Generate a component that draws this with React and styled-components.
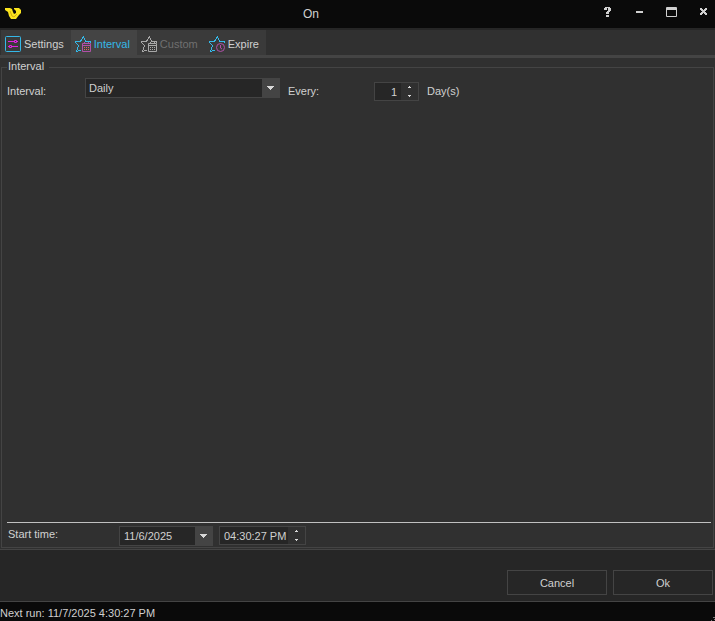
import React, { useState } from 'react'
import styled, { createGlobalStyle } from 'styled-components'

const GlobalStyle = createGlobalStyle`
  * {
    box-sizing: border-box;
  }
  body {
    margin: 0;
    background: #0a0a0a;
    overflow: hidden;
  }
  body, button, input, select {
    font-family: "Liberation Sans", Arial, sans-serif;
    font-size: 11px;
    line-height: 16px;
    color: #d0d0d0;
  }
`

const Window = styled.div`
  display: flex;
  flex-direction: column;
  min-height: 100vh;
  background: #262626;
`

const TitleBar = styled.header`
  display: flex;
  align-items: center;
  height: 28px;
  background: #0a0a0a;
`

const Logo = styled.svg`
  width: 16px;
  height: 16px;
  margin: 0 6px 0 5px;
`

const Title = styled.h1`
  flex: 1;
  margin: 0;
  font-size: 12px;
  font-weight: normal;
  text-align: center;
`

const WindowButtons = styled.div`
  display: flex;
  align-self: flex-start;
  gap: 8px;
  height: 24px;
`

const WindowButton = styled.button`
  display: flex;
  align-items: center;
  justify-content: center;
  width: 24px;
  padding: 0;
  border: 0;
  background: none;
`

const TabStrip = styled.nav`
  display: flex;
  height: 30px;
  padding-left: 1px;
  border-top: 2px solid #262626;
  border-bottom: 3px solid #444;
  background: #303030;
`

const Tab = styled.button`
  display: flex;
  align-items: center;
  gap: 3px;
  padding: 3px 7px 0 4px;
  border: 0;
  background: ${(p) => (p.$active ? '#444' : '#3a3a3a')};
  color: ${(p) => (p.$active ? '#35b8e8' : '#d0d0d0')};

  &:disabled {
    color: #707070;
  }
`

const Panel = styled.main`
  display: flex;
  flex: 1;
  padding: 0 1px 1px;
  border-bottom: 1px solid #444;
  background: #303030;
`

const Group = styled.fieldset`
  display: flex;
  flex: 1;
  flex-direction: column;
  min-width: 0;
  margin: 0;
  padding: 0 2px 1px 5px;
  border: 1px solid #444;
`

const Legend = styled.legend`
  padding: 0 5px 2px 1px;
`

const Row = styled.div`
  display: flex;
  align-items: flex-start;
  padding-top: 2px;
`

const StartRow = styled(Row)`
  margin-top: auto;
  padding-top: 3px;
  border-top: 1px solid #c0c0c0;
`

const Label = styled.label`
  width: ${(p) => p.$width}px;
  padding-top: 5px;
`

const StartLabel = styled(Label)`
  padding: 0 0 0 1px;
`

const Combo = styled.div`
  display: grid;
  grid-template-columns: 1fr 17px;
  width: ${(p) => p.$width}px;
  height: 20px;
  margin-right: ${(p) => p.$gap}px;
  border: 1px solid #444;
  background: #262626;

  > * {
    grid-row: 1;
  }
`

const Select = styled.select`
  grid-column: 1 / 3;
  padding: 0 20px 0 3px;
  border: 0;
  appearance: none;
  background: none;
`

const Field = styled.input`
  min-width: 0;
  padding: 0 ${(p) => (p.$align ? 4 : 0)}px 0 4px;
  border: 0;
  background: none;
  text-align: ${(p) => p.$align || 'left'};
`

const Arrow = styled.span`
  display: flex;
  grid-column: 2;
  align-items: center;
  justify-content: center;
  background: #444;
  pointer-events: none;
`

const DropButton = styled.button`
  display: flex;
  align-items: center;
  justify-content: center;
  padding: 0;
  border: 0;
  background: #444;
`

const Spinner = styled.div`
  display: grid;
  grid-template-columns: 1fr 17px;
  width: ${(p) => p.$width}px;
  height: 19px;
  margin-top: ${(p) => p.$top || 0}px;
  border: 1px solid #444;
  background: #262626;
`

const SpinButtons = styled.div`
  display: flex;
  flex-direction: column;
  background: #303030;
`

const SpinButton = styled.button`
  display: flex;
  flex: 1;
  align-items: center;
  justify-content: center;
  min-height: 0;
  padding: 0;
  border: 0;
  background: none;
`

const Unit = styled.span`
  padding: 5px 0 0 8px;
`

const Footer = styled.footer`
  display: flex;
  justify-content: flex-end;
  gap: 6px;
  padding: 20px 2px 6px;
  border-bottom: 1px solid #444;
`

const DialogButton = styled.button`
  width: 100px;
  height: 25px;
  padding: 0;
  border: 1px solid #444;
  background: #262626;
`

const StatusBar = styled.div`
  display: flex;
  align-items: flex-end;
  justify-content: space-between;
  height: 19px;
  padding-top: 3px;
  background: #0a0a0a;
`

function ArrowDown() {
  return (
    <svg width="7" height="4" viewBox="0 0 7 4" fill="#d8d8d8" shapeRendering="crispEdges" aria-hidden="true">
      <path d="M0 0h7v1H0zM1 1h5v1H1zM2 2h3v1H2zM3 3h1v1H3z" />
    </svg>
  )
}

function SpinArrow({ down }) {
  return (
    <svg width="3" height="2" viewBox="0 0 3 2" fill="#d8d8d8" shapeRendering="crispEdges" aria-hidden="true">
      <path d={down ? 'M0 0h3v1H0zM1 1h1v1H1z' : 'M1 0h1v1H1zM0 1h3v1H0z'} />
    </svg>
  )
}

function SettingsIcon() {
  return (
    <svg width="16" height="16" viewBox="0 0 16 16" fill="none" aria-hidden="true">
      <rect x=".5" y=".5" width="15" height="15" rx="1" stroke="#35b8e8" />
      <path d="M3 5.5h6M12 5.5h1M3 10.5h1M7 10.5h6M9.5 4.5h2v2h-2zM4.5 9.5h2v2h-2z" stroke="#e020e0" />
    </svg>
  )
}

function Star({ color, children }) {
  return (
    <svg width="16" height="16" viewBox="0 0 16 16" fill="none" aria-hidden="true">
      <path
        d="M6 14.5H5L1.5 15.5 3.5 9.5.5 6.5V5.5H5.5L8.5.5 10.5 5.5H15.5V6.5"
        stroke={color}
        shapeRendering="crispEdges"
      />
      {children}
    </svg>
  )
}

function CalendarMark({ color, dots }) {
  return (
    <>
      <path d="M7.5 7.5h8v8h-8zM8 9.5h7M9.5 6v2M13.5 6v2" stroke={color} />
      <path d="M9 11h1v1H9zM11 11h1v1h-1zM13 11h1v1h-1zM9 13h1v1H9zM11 13h1v1h-1zM13 13h1v1h-1z" fill={dots} />
    </>
  )
}

function ClockMark() {
  return (
    <>
      <circle cx="11.5" cy="11.5" r="4" stroke="#b050a8" />
      <path d="M11.5 9v3l1.5 1" stroke="#b050a8" />
    </>
  )
}

function Tabs() {
  return (
    <TabStrip>
      <Tab>
        <SettingsIcon />
        Settings
      </Tab>
      <Tab $active>
        <Star color="#35b8e8">
          <CalendarMark color="#b050a8" dots="#e06060" />
        </Star>
        Interval
      </Tab>
      <Tab disabled>
        <Star color="#a8a8a8">
          <CalendarMark color="#a8a8a8" dots="#a8a8a8" />
        </Star>
        Custom
      </Tab>
      <Tab>
        <Star color="#35b8e8">
          <ClockMark />
        </Star>
        Expire
      </Tab>
    </TabStrip>
  )
}

export default function App() {
  const [every, setEvery] = useState(1)
  const [date, setDate] = useState('11/6/2025')
  const [time, setTime] = useState('04:30:27 PM')

  return (
    <Window>
      <GlobalStyle />
      <TitleBar>
        <Logo viewBox="0 0 16 16" aria-hidden="true">
          <path d="M0 2h5l2 1 1 3 1 2 2-1V5L9 3V2h5l2 2v3l-2 2-3 4H6L4 10 3 6 0 4z" fill="#fbe51e" />
          <path d="M5 5l2 5 2 1 3-3" stroke="#d8ac10" fill="none" />
        </Logo>
        <Title>On</Title>
        <WindowButtons>
          <WindowButton aria-label="Help">
            <svg width="8" height="10" viewBox="0 0 8 10" fill="#d0d0d0" shapeRendering="crispEdges">
              <path d="M2 0h5v1H2zM1 1h3v2H1zM5 1h3v3H5zM4 4h3v1H4zM3 5h3v2H3zM3 8h3v2H3z" />
            </svg>
          </WindowButton>
          <WindowButton aria-label="Minimize">
            <svg width="8" height="2" viewBox="0 0 8 2" fill="#d0d0d0">
              <path d="M1 0h7v2H1z" />
            </svg>
          </WindowButton>
          <WindowButton aria-label="Maximize">
            <svg width="12" height="10" viewBox="0 0 12 10" fill="none" stroke="#d0d0d0">
              <path d="M1.5 .5h10v9h-10zM1 1.5h11M1 2.5h11" />
            </svg>
          </WindowButton>
          <WindowButton aria-label="Close">
            <svg width="8" height="8" viewBox="0 0 8 8" fill="#d0d0d0" shapeRendering="crispEdges">
              <path d="M1 0h2v1H1zM6 0h2v1H6zM1 1h3v1H1zM5 1h3v1H5zM2 2h5v1H2zM3 3h3v1H3zM2 4h5v1H2zM1 5h3v1H1zM5 5h3v1H5zM1 6h2v1H1zM6 6h2v1H6z" />
            </svg>
          </WindowButton>
        </WindowButtons>
      </TitleBar>

      <Tabs />

      <Panel>
        <Group>
          <Legend>Interval</Legend>
          <Row>
            <Label htmlFor="interval" $width={78}>Interval:</Label>
            <Combo $width={195} $gap={8}>
              <Select id="interval" defaultValue="Daily">
                <option>Daily</option>
                <option>Weekly</option>
                <option>Monthly</option>
              </Select>
              <Arrow>
                <ArrowDown />
              </Arrow>
            </Combo>
            <Label htmlFor="every" $width={86}>Every:</Label>
            <Spinner $width={45} $top={4}>
              <Field id="every" $align="right" value={every} onChange={(e) => setEvery(e.target.value)} />
              <SpinButtons>
                <SpinButton aria-label="More" onClick={() => setEvery(Number(every) + 1)}>
                  <SpinArrow />
                </SpinButton>
                <SpinButton aria-label="Less" onClick={() => setEvery(Math.max(1, Number(every) - 1))}>
                  <SpinArrow down />
                </SpinButton>
              </SpinButtons>
            </Spinner>
            <Unit>Day(s)</Unit>
          </Row>

          <StartRow>
            <StartLabel htmlFor="date" $width={112}>Start time:</StartLabel>
            <Combo $width={94} $gap={6}>
              <Field id="date" value={date} onChange={(e) => setDate(e.target.value)} />
              <DropButton aria-label="Open calendar">
                <ArrowDown />
              </DropButton>
            </Combo>
            <Spinner $width={87}>
              <Field aria-label="Time" value={time} onChange={(e) => setTime(e.target.value)} />
              <SpinButtons>
                <SpinButton aria-label="Later">
                  <SpinArrow />
                </SpinButton>
                <SpinButton aria-label="Earlier">
                  <SpinArrow down />
                </SpinButton>
              </SpinButtons>
            </Spinner>
          </StartRow>
        </Group>
      </Panel>

      <Footer>
        <DialogButton>Cancel</DialogButton>
        <DialogButton>Ok</DialogButton>
      </Footer>
      <StatusBar>
        <span>Next run: 11/7/2025 4:30:27 PM</span>
        <svg width="4" height="4" viewBox="0 0 4 4" fill="#777" aria-hidden="true">
          <path d="M2 0h2v1H2zM0 3h1v1H0zM3 2h1v1H3z" />
        </svg>
      </StatusBar>
    </Window>
  )
}
